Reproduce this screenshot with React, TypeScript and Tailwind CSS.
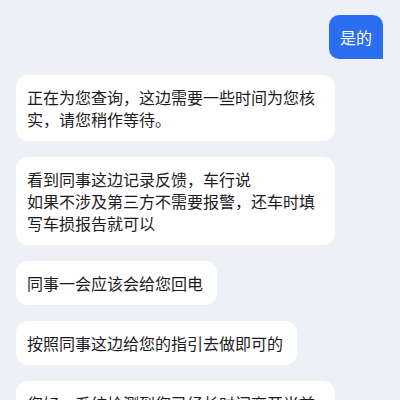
const replies = [
  "正在为您查询，这边需要一些时间为您核实，请您稍作等待。",
  "看到同事这边记录反馈，车行说\n如果不涉及第三方不需要报警，还车时填写车损报告就可以",
  "同事一会应该会给您回电",
  "按照同事这边给您的指引去做即可的",
  "您好，系统检测到您已经长时间离开当前页面，如有其他问题可以随时联系我们",
];

const Bubble = ({ text }: { text: string }) => (
  <div className="self-start max-w-[319px] rounded-[12px] bg-white py-[11px] pl-[11px] pr-[14px] text-[16px] leading-[22px] text-[#1c1c1e] whitespace-pre-line">
    {text}
  </div>
);

export default function App() {
  return (
    <div
      className="h-[400px] w-[400px] overflow-hidden bg-[#eef0f7] pl-4 pr-[17px] pt-[15px]"
      style={{ fontFamily: '"Noto Sans CJK SC", "Noto Sans", sans-serif' }}
    >
      <div className="flex flex-col gap-4">
        <div className="self-end rounded-[10px] rounded-br-none bg-[#2b6ef2] px-[11px] py-[11px] text-[16px] leading-[22px] text-white">
          是的
        </div>
        {replies.map((r, i) => (
          <Bubble key={i} text={r} />
        ))}
      </div>
    </div>
  );
}
